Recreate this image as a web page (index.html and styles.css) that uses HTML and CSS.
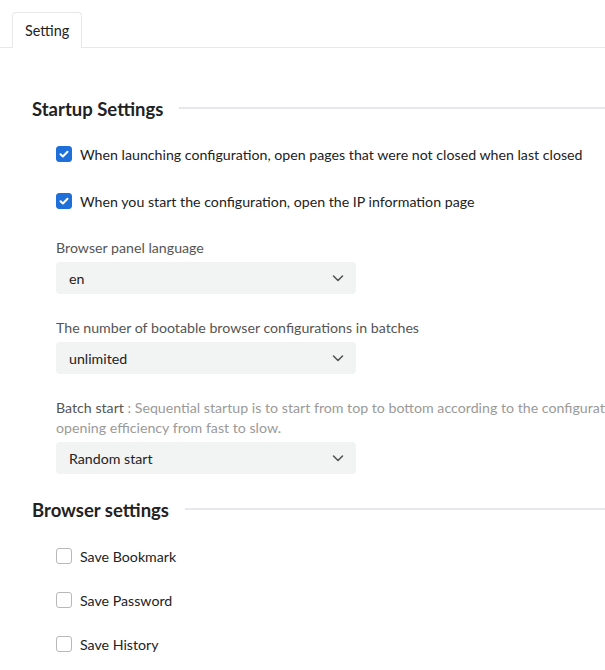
FILE: index.html
```html
<!DOCTYPE html>
<html lang="en">
<head>
  <meta charset="UTF-8" />
  <title>Setting</title>
  <link rel="stylesheet" href="styles.css">
</head>
<body>

  <div class="tabs">
    <div class="tab active">Setting</div>
  </div>

  <div class="content">
    <div class="section-title">
      <h2>Startup Settings</h2>
      <span class="line"></span>
    </div>

    <div class="group">
      <label class="check checked">
        <span class="box">
          <svg viewBox="0 0 16 16" width="16" height="16"><path d="M4.5 8.2l2.4 2.3 4.6-4.8" fill="none" stroke="#fff" stroke-width="2" stroke-linecap="round" stroke-linejoin="round"/></svg>
        </span>
        When launching configuration, open pages that were not closed when last closed
      </label>
      <label class="check checked second">
        <span class="box">
          <svg viewBox="0 0 16 16" width="16" height="16"><path d="M4.5 8.2l2.4 2.3 4.6-4.8" fill="none" stroke="#fff" stroke-width="2" stroke-linecap="round" stroke-linejoin="round"/></svg>
        </span>
        When you start the configuration, open the IP information page
      </label>

      <div class="field">
        <div class="label">Browser panel language</div>
        <div class="select">
          <span>en</span>
          <svg class="chevron" viewBox="0 0 12 12" width="12" height="12"><path d="M1.5 4l4.5 4.5L10.5 4" fill="none" stroke="#555" stroke-width="1.6" stroke-linecap="round" stroke-linejoin="round"/></svg>
        </div>
      </div>

      <div class="field">
        <div class="label">The number of bootable browser configurations in batches</div>
        <div class="select">
          <span>unlimited</span>
          <svg class="chevron" viewBox="0 0 12 12" width="12" height="12"><path d="M1.5 4l4.5 4.5L10.5 4" fill="none" stroke="#555" stroke-width="1.6" stroke-linecap="round" stroke-linejoin="round"/></svg>
        </div>
      </div>

      <div class="field">
        <div class="label hint"><span class="hint-title">Batch start</span> : Sequential startup is to start from top to bottom according to the configuration list, random startup is random,<br>opening efficiency from fast to slow.</div>
        <div class="select">
          <span>Random start</span>
          <svg class="chevron" viewBox="0 0 12 12" width="12" height="12"><path d="M1.5 4l4.5 4.5L10.5 4" fill="none" stroke="#555" stroke-width="1.6" stroke-linecap="round" stroke-linejoin="round"/></svg>
        </div>
      </div>
    </div>

    <div class="section-title">
      <h2>Browser settings</h2>
      <span class="line"></span>
    </div>

    <div class="group last">
      <label class="check"><span class="box"></span>Save Bookmark</label>
      <label class="check"><span class="box"></span>Save Password</label>
      <label class="check"><span class="box"></span>Save History</label>
    </div>
  </div>

</body>
</html>
```

FILE: styles.css
```css
body {
  margin: 0;
  font-family: Lato, "Noto Sans", sans-serif;
  font-size: 14.2px;
  color: #222;
  background-color: #fff;
  overflow: hidden;
}

.tabs {
  display: flex;
  padding: 12px 0 0 12px;
  border-bottom: 1px solid #e8e8e8;
  width: 700px;
}

.tab {
  height: 35px;
  line-height: 36px;
  padding: 0 12px;
  border: 1px solid #e8e8e8;
  border-bottom: none;
  border-radius: 4px 4px 0 0;
  margin-bottom: -1px;
  background-color: #fff;
  font-size: 14.4px;
  color: #222;
}

.content {
  padding: 46px 0 0 32px;
  width: 800px;
}

.section-title {
  display: flex;
  align-items: center;
  height: 30px;
}

.section-title h2 {
  margin: 0 16px 0 0;
  font-size: 18.5px;
  font-weight: 700;
  color: #222;
  white-space: nowrap;
}

.section-title .line {
  flex: 1;
  height: 2px;
  background-color: #e8e8ec;
  margin-top: -2px;
}

.group {
  padding: 20px 0 21px 24px;
}

.group.last {
  padding-top: 21px;
}

.check {
  display: flex;
  align-items: center;
  height: 20px;
  margin-bottom: 24px;
  white-space: nowrap;
}

.check.second {
  margin-top: 27px;
  margin-bottom: 27px;
}

.check .box {
  width: 14px;
  height: 14px;
  border: 1px solid #b8b8b8;
  border-radius: 3px;
  margin-right: 8px;
  display: flex;
  align-items: center;
  justify-content: center;
  background-color: #fff;
}

.check.checked .box {
  background-color: #1e6fd9;
  border-color: #1e6fd9;
}

.check.checked .box svg {
  flex: none;
}

.field {
  margin-bottom: 24px;
}

.field:last-child {
  margin-bottom: 0;
}

.label {
  color: #555;
  line-height: 20px;
  margin-bottom: 4px;
  white-space: nowrap;
}

.label.hint {
  color: #9a9a9a;
}

.hint-title {
  color: #555;
}

.select {
  display: flex;
  align-items: center;
  justify-content: space-between;
  width: 300px;
  height: 32px;
  box-sizing: border-box;
  padding: 0 12px 0 13px;
  background-color: #f2f3f3;
  border-radius: 4px;
  color: #222;
}
```
